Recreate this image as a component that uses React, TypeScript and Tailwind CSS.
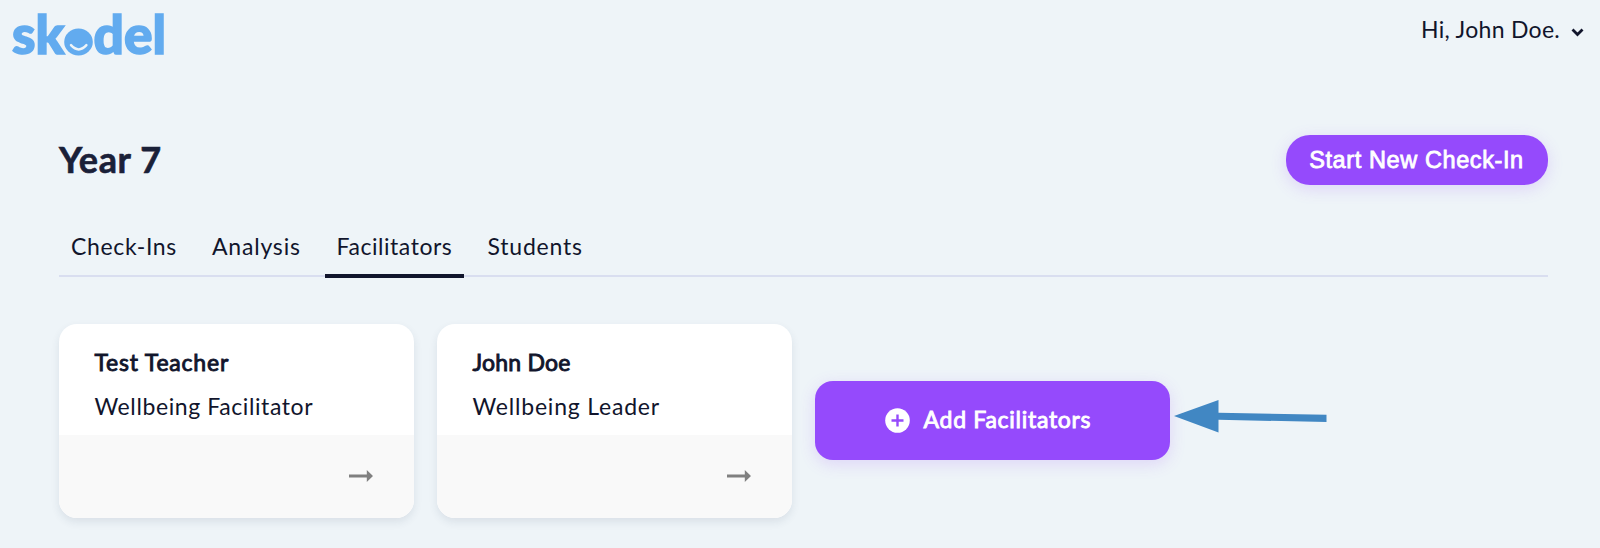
import React from "react";

const INK = "text-[#11152c]";

function Logo() {
  return (
    <svg width="170" height="68" viewBox="0 0 170 68" fill="#62abef" aria-label="skodel">
      <g fontFamily="Lato, sans-serif" fontWeight="900" fontSize="53" stroke="#62abef" strokeWidth="1.6">
        <text x="12" y="54.3" textLength="52.5" lengthAdjust="spacingAndGlyphs">sk</text>
        <text x="93.5" y="54.3" textLength="72.5" lengthAdjust="spacingAndGlyphs">del</text>
      </g>
      <ellipse cx="78.5" cy="42" rx="14.3" ry="13.4" />
      <path d="M71 45.2Q78.7 53.6 86.4 45.2" fill="none" stroke="#eef4f8" strokeWidth="2.5" strokeLinecap="round" />
    </svg>
  );
}

function Card({ name, role, nameClass, roleClass }: { name: string; role: string; nameClass: string; roleClass: string }) {
  return (
    <article className="flex h-[193.5px] w-[354.5px] flex-col overflow-hidden rounded-[18px] bg-white shadow-[0_4px_8px_rgba(40,60,90,0.10)]">
      <div className="h-[111px] pl-[35.5px] pt-[22px]">
        <h2 className={`h-8 leading-8 [-webkit-text-stroke:0.9px_#11152c] ${nameClass}`}>{name}</h2>
        <p className={`mt-3 h-8 leading-8 ${roleClass}`}>{role}</p>
      </div>
      <div className="flex flex-1 items-center justify-end bg-[#f9f9f9] pr-[41px]">
        <svg width="24" height="12" viewBox="0 0 24 12" fill="#808080">
          <path d="M0 4.6H17.8V0L24 6L17.8 12V7.4H0Z" />
        </svg>
      </div>
    </article>
  );
}

export default function App() {
  return (
    <div className={`h-[548px] w-[1600px] overflow-hidden bg-[#eef4f8] font-['Lato',sans-serif] text-[23px] ${INK}`}>
      <header className="flex h-[70px] items-start justify-between pr-4">
        <Logo />
        <button className="mt-[13px] flex h-8 items-center leading-8">
          <span className="w-[138px] whitespace-nowrap tracking-[0.3px]">Hi, John Doe.</span>
          <svg className="ml-[12px] mt-[6px]" width="13" height="9" viewBox="0 0 13 9" fill="none" stroke="#11152c" strokeWidth="2.8">
            <path d="M1.5 1.5L6.5 6.5L11.5 1.5" />
          </svg>
        </button>
      </header>

      <main className="pl-[59px] pr-[52.5px]">
        <div className="flex h-[115px] items-start justify-between pt-[64.5px]">
          <h1 className="-mt-[1px] h-[50px] text-[36px] font-bold leading-[50px] tracking-[0.6px] text-[#1a2038] [-webkit-text-stroke:0.6px_#1a2038]">Year 7</h1>
          <button className="h-[50px] w-[262px] whitespace-nowrap rounded-[24px] bg-[#954afc] font-['Liberation_Sans',sans-serif] text-[23.5px] leading-[51px] tracking-[0.6px] text-white shadow-[0_4px_16px_rgba(149,74,252,0.18)] [-webkit-text-stroke:0.8px_white]">
            Start New Check-In
          </button>
        </div>

        <nav className="flex h-[92px] items-end whitespace-nowrap border-b-2 border-[#d9def0]">
          <a className="h-[45px] w-[141px] pl-3 leading-8 tracking-[0.65px]">Check-Ins</a>
          <a className="h-[45px] w-[124.5px] pl-3 leading-8 tracking-[0.8px]">Analysis</a>
          <a className="-mb-[3px] h-[48px] w-[139px] border-b-4 border-[#11152c] pl-3 leading-8 tracking-[0.55px]">Facilitators</a>
          <a className="h-[45px] pl-[24px] leading-8 tracking-[0.8px]">Students</a>
        </nav>

        <section className="mt-[47px] flex items-start gap-[23.5px]">
          <Card name="Test Teacher" role="Wellbeing Facilitator" nameClass="tracking-[0.8px]" roleClass="tracking-[0.6px]" />
          <Card name="John Doe" role="Wellbeing Leader" nameClass="tracking-[0.2px]" roleClass="tracking-[0.8px]" />
          <div className="mt-[57px] flex items-start">
            <button className="flex h-[79px] w-[354.5px] items-center rounded-[18px] bg-[#954afc] pl-[70px] text-white shadow-[0_4px_16px_rgba(149,74,252,0.18)]">
              <svg width="25" height="25" viewBox="0 0 25 25">
                <circle cx="12.5" cy="12.5" r="12.3" fill="white" />
                <path d="M12.5 6.5V18.5M6.5 12.5H18.5" stroke="#954afc" strokeWidth="2.4" />
              </svg>
              <span className="-mt-[2px] ml-[13.5px] whitespace-nowrap tracking-[0.72px] [-webkit-text-stroke:0.9px_white]">Add Facilitators</span>
            </button>
            <svg className="ml-[4px] mt-[19px]" width="153" height="34" viewBox="0 0 153 34" fill="#4187c3">
              <path d="M0 16L44.5 0V12.8L152.5 14.8V22L44.5 19.8V32.5Z" />
            </svg>
          </div>
        </section>
      </main>
    </div>
  );
}
